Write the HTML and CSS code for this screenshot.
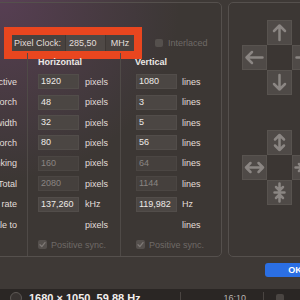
FILE: index.html
```html
<!DOCTYPE html>
<html lang="en">
<head>
    <meta name="viewport" content="width=device-width, initial-scale=1.0">
    <title>Custom Resolution</title>
    <link rel="stylesheet" href="styles.css">
</head>
<body>
    <div class="dialog">
        <div class="panes">
            <section class="group timing">
                <div class="clock-row">
                    <div class="clock-field">
                        <span class="clock-label">Pixel Clock:</span>
                        <span class="clock-value">285,50</span>
                        <span class="clock-unit">MHz</span>
                    </div>
                    <div class="check">
                        <span class="box"></span>
                        <span>Interlaced</span>
                    </div>
                </div>

                <div class="table">
                    <div class="col labels">
                        <div class="head"></div>
                        <div class="row">Active</div>
                        <div class="row">Front porch</div>
                        <div class="row">Sync width</div>
                        <div class="row">Back porch</div>
                        <div class="row">Blanking</div>
                        <div class="row">Total</div>
                        <div class="row">Scan rate</div>
                        <div class="row">Scale to</div>
                    </div>

                    <div class="col horiz">
                        <div class="head">Horizontal</div>
                        <div class="row"><span class="field">1920</span><span class="unit">pixels</span></div>
                        <div class="row"><span class="field">48</span><span class="unit">pixels</span></div>
                        <div class="row"><span class="field">32</span><span class="unit">pixels</span></div>
                        <div class="row"><span class="field">80</span><span class="unit">pixels</span></div>
                        <div class="row"><span class="field dim">160</span><span class="unit">pixels</span></div>
                        <div class="row"><span class="field dim">2080</span><span class="unit">pixels</span></div>
                        <div class="row"><span class="field">137,260</span><span class="unit">kHz</span></div>
                        <div class="row"><span class="field empty"></span><span class="unit">pixels</span></div>
                        <div class="row">
                            <div class="check sync">
                                <span class="box checked">
                                    <svg viewBox="0 0 9 9"><path d="M2 4.8 L3.8 6.6 L7 2.6"/></svg>
                                </span>
                                <span>Positive sync.</span>
                            </div>
                        </div>
                    </div>

                    <div class="col vert">
                        <div class="head">Vertical</div>
                        <div class="row"><span class="field">1080</span><span class="unit">lines</span></div>
                        <div class="row"><span class="field">3</span><span class="unit">lines</span></div>
                        <div class="row"><span class="field">5</span><span class="unit">lines</span></div>
                        <div class="row"><span class="field">56</span><span class="unit">lines</span></div>
                        <div class="row"><span class="field dim">64</span><span class="unit">lines</span></div>
                        <div class="row"><span class="field dim">1144</span><span class="unit">lines</span></div>
                        <div class="row"><span class="field">119,982</span><span class="unit">Hz</span></div>
                        <div class="row"><span class="field empty"></span><span class="unit">lines</span></div>
                        <div class="row">
                            <div class="check sync">
                                <span class="box checked">
                                    <svg viewBox="0 0 9 9"><path d="M2 4.8 L3.8 6.6 L7 2.6"/></svg>
                                </span>
                                <span>Positive sync.</span>
                            </div>
                        </div>
                    </div>
                </div>
            </section>

            <section class="group arrange">
                <!-- move -->
                <div class="pad">
                    <span></span>
                    <span class="key"><svg viewBox="0 0 25 25"><path d="M12.5 20 V5.5 M7 11 L12.5 5.5 L18 11"/></svg></span>
                    <span></span>
                    <span class="key"><svg viewBox="0 0 25 25"><path d="M20.5 12.5 H4.5 M10 7 L4.5 12.5 L10 18"/></svg></span>
                    <span class="key mid"></span>
                    <span class="key"><svg viewBox="0 0 25 25"><path d="M4.5 12.5 H20.5 M15 7 L20.5 12.5 L15 18"/></svg></span>
                    <span></span>
                    <span class="key"><svg viewBox="0 0 25 25"><path d="M12.5 5 V19.5 M7 14 L12.5 19.5 L18 14"/></svg></span>
                    <span></span>
                </div>

                <!-- resize -->
                <div class="pad">
                    <span></span>
                    <span class="key"><svg viewBox="0 0 25 25"><path d="M12.5 5 V20 M8 9.5 L12.5 5 L17 9.5 M8 15.5 L12.5 20 L17 15.5"/></svg></span>
                    <span></span>
                    <span class="key"><svg viewBox="0 0 25 25"><path d="M4 12.5 H21 M8.5 8 L4 12.5 L8.5 17 M16.5 8 L21 12.5 L16.5 17"/></svg></span>
                    <span class="key mid"></span>
                    <span class="key"><svg viewBox="0 0 25 25"><path d="M3.5 12.5 H10.5 M7 9 L10.5 12.5 L7 16 M12.5 7.5 V17.5 M21.5 12.5 H14.5 M18 9 L14.5 12.5 L18 16"/></svg></span>
                    <span></span>
                    <span class="key"><svg viewBox="0 0 25 25"><path d="M12.5 3.5 V10.5 M9 7 L12.5 10.5 L16 7 M7.5 12.5 H17.5 M12.5 21.5 V14.5 M9 18 L12.5 14.5 L16 18"/></svg></span>
                    <span></span>
                </div>
            </section>
        </div>

        <div class="footer">
            <button class="ok">OK</button>
        </div>
    </div>

    <div class="list-row">
        <span class="status-icon"></span>
        <span class="mode">1680 × 1050, 59,88 Hz</span>
        <span class="ratio">16:10</span>
        <span class="end"><span class="tick"></span></span>
    </div>
</body>
</html>
```

FILE: styles.css
```css
* {
    margin: 0;
    padding: 0;
    box-sizing: border-box;
}

body {
    width: 300px;
    height: 300px;
    overflow: hidden;
    font-family: "Liberation Sans", Arial, sans-serif;
    font-size: 9px;
    color: #e2deda;
    background:
        radial-gradient(circle at 0 0, rgba(118, 72, 118, 0.5), rgba(118, 72, 118, 0) 180px),
        #3e3936;
}

.dialog {
    height: 289px;
    display: flex;
    flex-direction: column;
    padding-top: 2px;
}

.panes {
    display: flex;
    gap: 6px;
    margin-left: -70px;
    height: 255px;
}

.group {
    flex: none;
    border: 1px solid #55504d;
    border-radius: 5px;
    background: rgba(0, 0, 0, 0.03);
}

.timing {
    width: 292px;
    display: flex;
    flex-direction: column;
}

.arrange {
    width: 120px;
    padding: 17px 0 0 13px;
}

/* pixel clock */

.clock-row {
    display: flex;
    align-items: center;
    gap: 21px;
    height: 16px;
    margin: 32px 0 0 81px;
}

.clock-field {
    display: flex;
    height: 16px;
    line-height: 16px;
    background: #48423f;
    outline: 8px solid #e9461f;
}

.clock-label {
    width: 53px;
    padding-left: 2px;
}

.clock-value {
    width: 41px;
    padding-left: 3px;
    background: #4f4946;
    border-left: 1px solid #3e3835;
    border-right: 1px solid #3e3835;
}

.clock-unit {
    width: 28px;
    text-align: center;
}

.check {
    display: flex;
    align-items: center;
    gap: 5px;
    color: #6f6a67;
}

.box {
    width: 8px;
    height: 8px;
    border-radius: 2px;
    background: #55504d;
}

.sync {
    gap: 4px;
}

.sync .box {
    width: 9px;
    height: 9px;
}

.box svg {
    display: block;
    width: 9px;
    height: 9px;
    fill: none;
    stroke: #7e7976;
    stroke-width: 1.3;
    stroke-linecap: round;
    stroke-linejoin: round;
}

/* timing table */

.table {
    flex: 1;
    display: flex;
    margin-top: 2px;
}

.col {
    display: flex;
    flex-direction: column;
}

.labels {
    width: 96px;
    padding-right: 10px;
}

.horiz {
    width: 93px;
    padding-left: 10px;
    border-left: 1px solid #4f4a47;
}

.vert {
    flex: 1;
    padding-left: 15px;
    border-left: 1px solid #4f4a47;
}

.head {
    height: 18.6px;
    line-height: 18.6px;
    font-weight: bold;
    color: #ece8e5;
}

.vert .head {
    margin-left: -1px;
}

.row {
    height: 20.4px;
    display: flex;
    align-items: center;
    white-space: nowrap;
}

.labels .row {
    justify-content: flex-end;
}

.field {
    width: 41px;
    height: 15px;
    line-height: 13px;
    padding-left: 2px;
    background: #4b4643;
    border: 1px solid #524d4a;
    color: #eeeae7;
}

.field.dim {
    color: #8a8582;
    background: #45403d;
    border-color: #4b4643;
}

.field.empty {
    background: transparent;
    border-color: transparent;
}

.unit {
    margin-left: 6px;
}

.vert .unit {
    margin-left: 5px;
}

/* arrow pads */

.pad {
    display: grid;
    grid-template-columns: repeat(3, 25px);
    grid-template-rows: repeat(3, 25px);
}

.pad + .pad {
    margin-top: 35px;
}

.key {
    background: #4f4a47;
    border: 1px solid #58534f;
}

.key.mid {
    background: #3b3633;
    border: none;
}

.key svg {
    display: block;
    width: 25px;
    height: 25px;
    margin: -1px;
    fill: none;
    stroke: #8b8683;
    stroke-width: 2.5;
    stroke-linecap: round;
    stroke-linejoin: round;
}

/* footer */

.footer {
    display: flex;
    justify-content: flex-end;
    padding-top: 6px;
}

.ok {
    width: 60px;
    height: 14px;
    margin-right: -25px;
    border: none;
    border-radius: 3px;
    background: #2b6fe4;
    color: #fff;
    font-family: "Liberation Sans", Arial, sans-serif;
    font-size: 9px;
    font-weight: bold;
}

/* list row below the sheet */

.list-row {
    height: 11px;
    display: flex;
    padding-top: 3px;
    background: #2a2624;
    white-space: nowrap;
}

.status-icon {
    flex: none;
    width: 12px;
    height: 12px;
    margin: 0 7px 0 10px;
    border-radius: 50%;
    border: 1px solid #5d5855;
    background: #383331;
}

.mode {
    width: 151px;
    font-size: 11px;
    line-height: 13px;
    font-weight: bold;
    color: #f2efec;
}

.ratio {
    width: 83px;
    padding-right: 17px;
    text-align: right;
    font-size: 9px;
    line-height: 13px;
    color: #b9b4b1;
    border-left: 1px solid #4a4542;
}

.end {
    flex: 1;
    padding-left: 12px;
    border-left: 1px solid #4a4542;
}

.tick {
    display: block;
    width: 8px;
    height: 8px;
    margin-top: 2px;
    border-radius: 2px;
    background: #4a4542;
}
```
